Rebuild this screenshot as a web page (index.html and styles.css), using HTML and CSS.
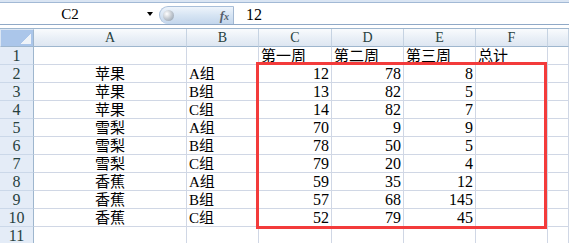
FILE: index.html
```
<!DOCTYPE html>
<html lang="zh-CN">

<head>
  <meta charset="UTF-8">
  <meta name="viewport" content="width=device-width, initial-scale=1.0">
  <title>Sheet1</title>
  <link rel="stylesheet" href="styles.css">
</head>

<body>
  <div class="top-strip"></div>

  <div class="formula-bar">
    <div class="name-box">
      <span class="name">C2</span>
      <span class="arrow"></span>
    </div>
    <div class="fx-button">
      <span class="ball"></span>
      <span class="fx">f<span class="fx-x">x</span></span>
    </div>
    <div class="formula">12</div>
  </div>

  <div class="sheet">
    <div class="grid" id="grid">
      <!-- cells are built by the script below -->
    </div>
    <div class="highlight"></div>
  </div>

  <script>
    // rows: fruit, group, week 1, week 2, week 3
    const rows = [
      ['苹果', 'A组', 12, 78, 8],
      ['苹果', 'B组', 13, 82, 5],
      ['苹果', 'C组', 14, 82, 7],
      ['雪梨', 'A组', 70, 9, 9],
      ['雪梨', 'B组', 78, 50, 5],
      ['雪梨', 'C组', 79, 20, 4],
      ['香蕉', 'A组', 59, 35, 12],
      ['香蕉', 'B组', 57, 68, 145],
      ['香蕉', 'C组', 52, 79, 45]
    ];

    const grid = document.getElementById('grid');
    let html = '<div class="corner"><span class="corner-tri"></span></div>';

    ['A', 'B', 'C', 'D', 'E', 'F', ''].forEach(letter => {
      html += `<div class="col-head">${letter}</div>`;
    });

    // row 1 holds the week titles
    html += '<div class="row-head">1</div><div class="cell"></div><div class="cell"></div>';
    ['第一周', '第二周', '第三周', '总计'].forEach(title => {
      html += `<div class="cell">${title}</div>`;
    });
    html += '<div class="cell"></div>';

    rows.forEach((row, index) => {
      html += `
        <div class="row-head">${index + 2}</div>
        <div class="cell center">${row[0]}</div>
        <div class="cell">${row[1]}</div>
        <div class="cell num">${row[2]}</div>
        <div class="cell num">${row[3]}</div>
        <div class="cell num">${row[4]}</div>
        <div class="cell"></div>
        <div class="cell"></div>
      `;
    });

    html += '<div class="row-head">11</div>';
    for (let i = 0; i < 7; i++) {
      html += '<div class="cell"></div>';
    }

    grid.innerHTML = html;
  </script>
</body>

</html>
```

FILE: styles.css
```
body {
  margin: 0;
  width: 569px;
  height: 243px;
  overflow: hidden;
  background-color: #ffffff;
  font-family: "Liberation Serif", "Noto Sans CJK SC", serif;
}

.top-strip {
  height: 2px;
  background-color: #dae5f3;
  border-bottom: 1px solid #a2b9d5;
}

.formula-bar {
  display: flex;
  height: 21px;
  border-bottom: 1px solid #90a9c7;
}

.name-box {
  width: 159px;
  display: flex;
  align-items: center;
}

.name {
  width: 140px;
  text-align: center;
  font-size: 15px;
  line-height: 21px;
  padding-top: 1px;
}

.arrow {
  margin-left: 7px;
  border-left: 3px solid transparent;
  border-right: 3px solid transparent;
  border-top: 4px solid #000000;
}

.fx-button {
  width: 75px;
  margin-top: 3px;
  display: flex;
  align-items: center;
  justify-content: space-between;
  padding: 0 4px 0 3px;
  box-sizing: border-box;
  border-radius: 9px 0 0 9px;
  border-top: 1px solid #a9bfd9;
  border-left: 1px solid #a9bfd9;
  border-right: 1px solid #a3b8d2;
  background: linear-gradient(#eef4fb, #d6e4f3 50%, #c3d6ec);
}

.ball {
  width: 11px;
  height: 11px;
  border-radius: 50%;
  background: radial-gradient(circle at 35% 35%, #ffffff, #c7cdd4 45%, #8795a5);
}

.fx {
  font-style: italic;
  font-weight: bold;
  font-size: 13px;
  color: #55606c;
  line-height: 17px;
}

.fx-x {
  font-size: 10px;
}

.formula {
  padding-left: 12px;
  font-size: 16px;
  line-height: 21px;
  padding-top: 1px;
}

.sheet {
  position: relative;
  margin-top: 3px;
  border-top: 1px solid #9eb6ce;
}

.grid {
  display: grid;
  grid-template-columns: 34px 153px 72px 73px 72px 72px 72px 1fr;
  grid-auto-rows: 18px;
}

.grid > div {
  box-sizing: border-box;
  line-height: 17px;
  white-space: nowrap;
  overflow: hidden;
}

.corner {
  display: flex;
  justify-content: flex-end;
  align-items: flex-end;
  padding: 0 2px 2px 0;
  background-color: #abc6ea;
  border: 1px solid #dbe6f4;
  border-right: 1px solid #9eb6ce;
  border-bottom: 1px solid #9eb6ce;
}

.corner-tri {
  width: 11px;
  height: 10px;
  background: linear-gradient(to bottom right, transparent 50%, #eef3f9 50%);
}

.col-head {
  text-align: center;
  font-size: 14px;
  color: #27413e;
  background: linear-gradient(#f9fbfd, #eaf0f7 50%, #dde6f1);
  border-right: 1px solid #c6d3e2;
  border-bottom: 1px solid #9eb6ce;
}

.row-head {
  text-align: center;
  font-size: 16px;
  color: #27413e;
  background-color: #e4ecf7;
  border-right: 1px solid #9eb6ce;
  border-bottom: 1px solid #cbd8e9;
}

.cell {
  font-size: 15px;
  padding: 1px 2px 0 2px;
  border-right: 1px solid #d0d7e5;
  border-bottom: 1px solid #d0d7e5;
}

.cell.center {
  text-align: center;
}

.cell.num {
  font-size: 16px;
  text-align: right;
  padding-top: 0;
}

.highlight {
  position: absolute;
  left: 256px;
  top: 33px;
  width: 291px;
  height: 167px;
  box-sizing: border-box;
  border: 3px solid #f33b3b;
}
```
